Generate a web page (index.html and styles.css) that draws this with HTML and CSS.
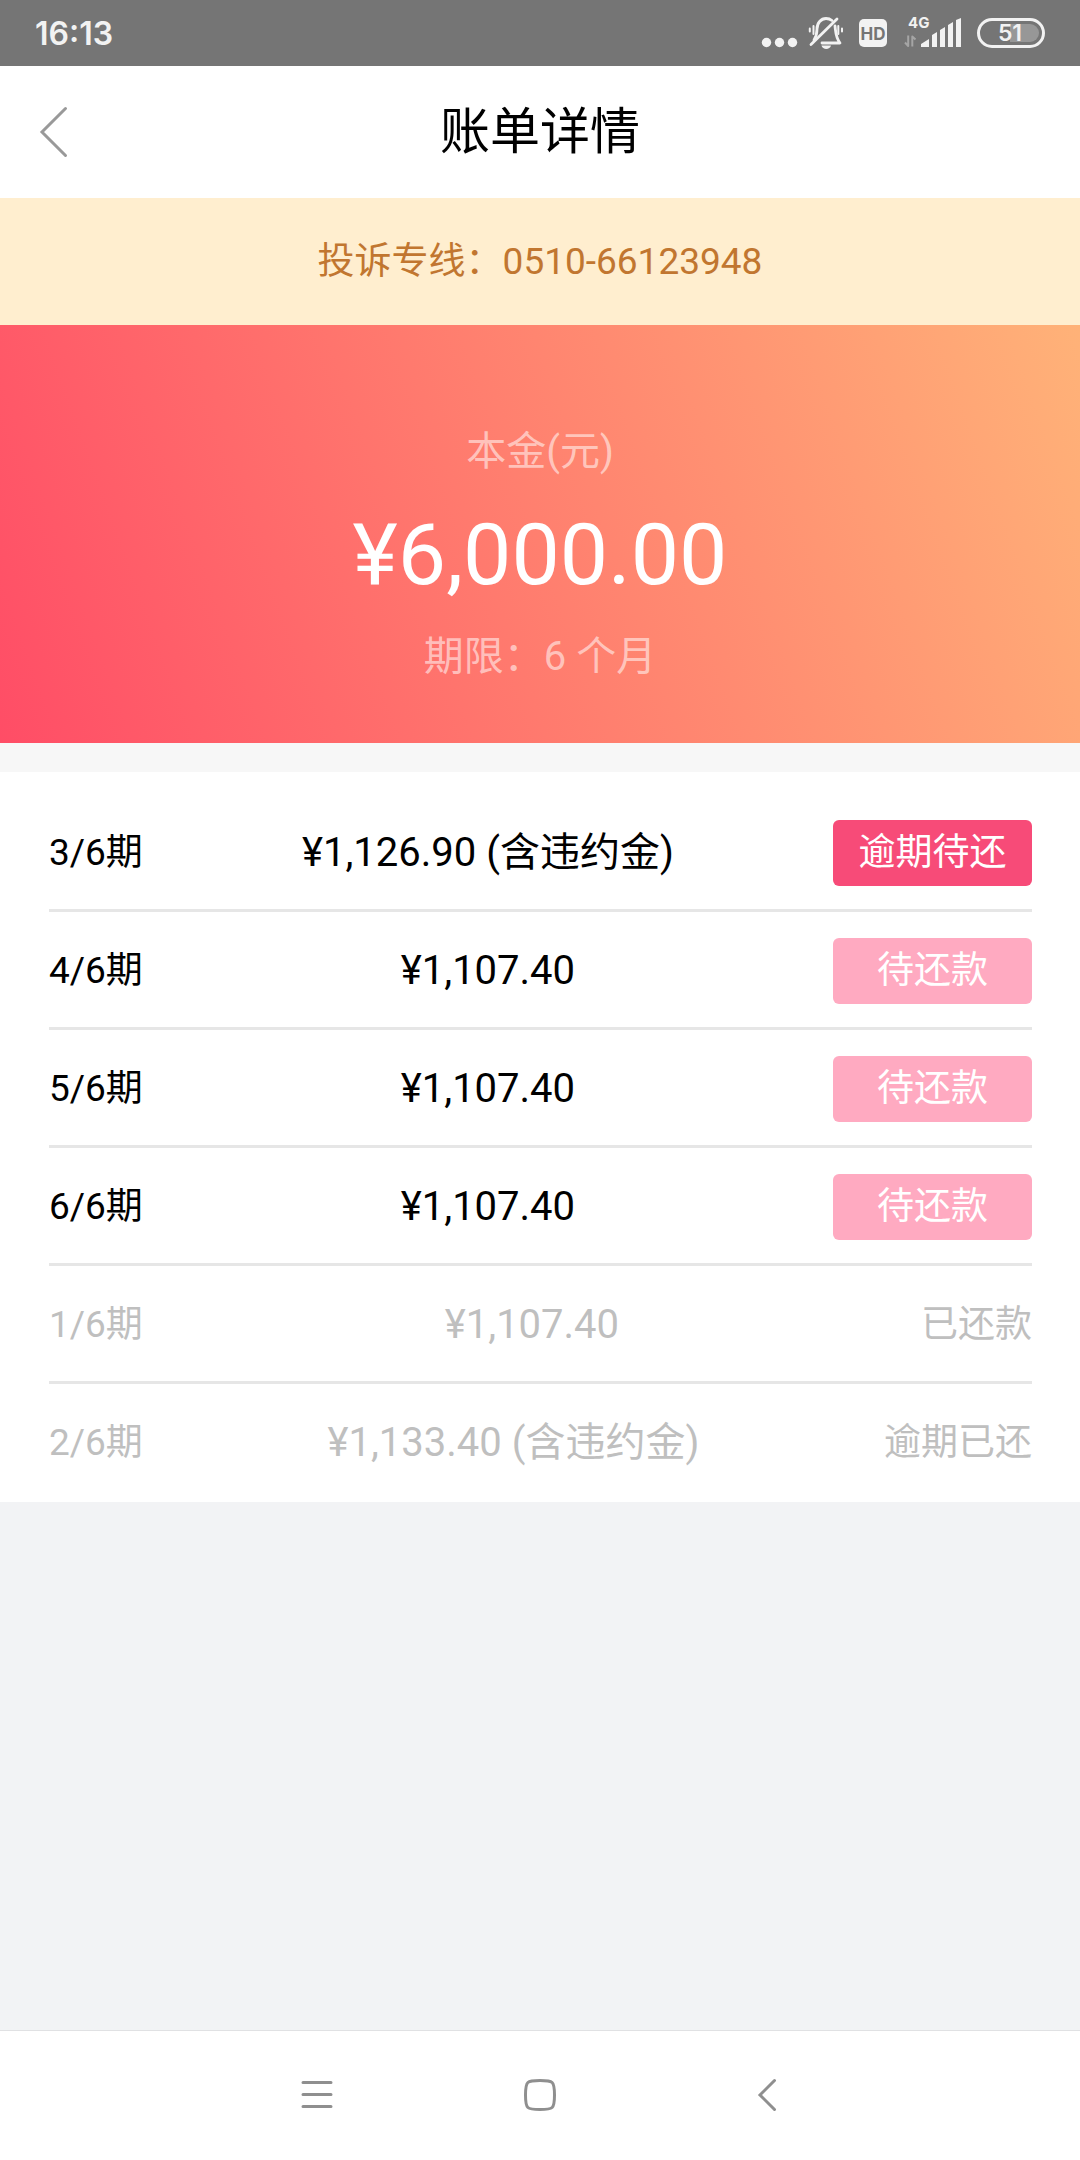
FILE: index.html
```
<!DOCTYPE html>
<html lang="zh-CN">
<head>
<meta charset="utf-8">
<meta name="viewport" content="width=device-width, initial-scale=1">
<title>账单详情</title>
<link rel="stylesheet" href="styles.css">
</head>
<body>
<div class="status-bar">
  <span class="clock">16:13</span>
  <div class="status-icons">
    <svg width="38" height="66" viewBox="760 0 38 66" fill="#f2f2f2"><circle cx="766.5" cy="42.5" r="4.7"/><circle cx="779.5" cy="42.5" r="4.7"/><circle cx="792.5" cy="42.5" r="4.7"/></svg>
    <svg width="36" height="66" viewBox="808 0 36 66" fill="none" stroke="#f2f2f2" stroke-width="2.8" stroke-linecap="round" stroke-linejoin="round"><path d="M814 40c2-3 3-6 3-11 0-6 4-10.500 9-10.500 2.500 0 4.500.8 6 2"/><path d="M835 26c.8 6 .5 11 5 17h-18"/><path d="M811 44.500L837 19"/><path d="M813.500 26v8M809.800 28.500v3M838.300 26v8M842 28.500v3" stroke-width="2"/><path d="M821.500 45.500h9.500c-1 4.500-8.500 4.500-9.500 0z" fill="#f2f2f2" stroke="none"/></svg>
    <svg width="38" height="66" viewBox="854 0 38 66"><rect x="859" y="19" width="28" height="28" rx="5" fill="#f2f2f2"/><text class="hd" x="873" y="40" text-anchor="middle">HD</text></svg>
    <svg width="64" height="66" viewBox="902 0 64 66" fill="#f2f2f2"><text class="net" x="908" y="28">4G</text><path d="M921 47v-3l8-5v8zM932 47V35l5-3v15zM940 47V30l5-3v20zM948 47V25l5-3v25zM956 47V20l5-2v29z"/><path d="M908.200 35.500v10.500l-3.200-3.500M912.300 46.500V36.500l3.200 3" fill="none" stroke="#a5a5a5" stroke-width="2" stroke-linejoin="round"/></svg>
    <svg width="70" height="66" viewBox="976 0 70 66"><path d="M1010 24h20a9 9 0 0 1 0 18h-20z" fill="#979797"/><rect x="978.500" y="19.500" width="65" height="27" rx="13.500" fill="none" stroke="#f2f2f2" stroke-width="3"/><text class="battery" x="1010" y="41" text-anchor="middle">51</text></svg>
  </div>
</div>
<header class="title-bar">
  <button class="back" type="button" aria-label="返回"><svg width="30" height="54" viewBox="0 0 30 54"><path d="M26.500 3.500L3 27l23.500 23.500"/></svg></button>
  <h1>账单详情</h1>
</header>
<p class="hotline">投诉专线：<a href="tel:051066123948">0510-66123948</a></p>
<main>
  <section class="summary">
    <p class="summary-note">本金(元)</p>
    <p class="principal">¥6,000.00</p>
    <p class="summary-note">期限：6 个月</p>
  </section>
  <ul class="bills">
    <li><span>3/6期</span><span class="amount">¥1,126.90 (含违约金)</span><button class="pay overdue" type="button">逾期待还</button></li>
    <li><span>4/6期</span><span class="amount">¥1,107.40</span><button class="pay" type="button">待还款</button></li>
    <li><span>5/6期</span><span class="amount">¥1,107.40</span><button class="pay" type="button">待还款</button></li>
    <li><span>6/6期</span><span class="amount">¥1,107.40</span><button class="pay" type="button">待还款</button></li>
    <li class="paid"><span>1/6期</span><span class="amount">¥1,107.40</span><span>已还款</span></li>
    <li class="paid"><span>2/6期</span><span class="amount">¥1,133.40 (含违约金)</span><span>逾期已还</span></li>
  </ul>
</main>
<nav class="system-nav">
  <button type="button" aria-label="菜单"><svg width="40" height="40" viewBox="0 0 40 40"><path d="M8 6.500h28M8 18.500h28M8 30.500h28"/></svg></button>
  <button type="button" aria-label="主页"><svg width="40" height="40" viewBox="0 0 40 40"><path d="M20 4.500C33 4.500 34.500 5 34.500 19S33 33.500 20 33.500 5.500 33 5.500 19 7 4.500 20 4.500z"/></svg></button>
  <button type="button" aria-label="返回"><svg width="40" height="40" viewBox="0 0 40 40"><path d="M29.500 4.500L15 19l14.500 14.500"/></svg></button>
</nav>
</body>
</html>
```
FILE: styles.css
```
* { box-sizing: border-box; }

body {
  margin: 0;
  min-height: 100vh;
  display: flex;
  flex-direction: column;
  background: #f2f3f5;
  color: #000;
  font-family: Roboto, "Noto Sans CJK SC", sans-serif;
  font-size: 37px;
  line-height: 54px;
}

h1, p, ul { margin: 0; padding: 0; }

button {
  padding: 0;
  border: 0;
  background: none;
  font: inherit;
  color: inherit;
}

svg { display: block; }

.status-bar {
  display: flex;
  justify-content: space-between;
  align-items: center;
  height: 66px;
  padding: 0 34px 0 35px;
  background: #757575;
  color: #f2f2f2;
}

.clock {
  padding-top: 2px;
  font-family: Inter, sans-serif;
  font-size: 32px;
  font-weight: 600;
}

.status-icons { display: flex; gap: 10px; }

.hd, .net, .battery { font-family: Inter, sans-serif; font-weight: 700; }
.hd { font-size: 17px; fill: #757575; }
.net { font-size: 15px; }
.battery { font-size: 23px; font-weight: 600; fill: #f2f2f2; }

.title-bar {
  display: grid;
  grid-template-columns: 1fr auto 1fr;
  align-items: center;
  height: 132px;
  padding: 0 39px;
  background: #fff;
}

.title-bar h1 {
  font-size: 50px;
  font-weight: 400;
  line-height: 72px;
}

.back { justify-self: start; }

.back path {
  fill: none;
  stroke: #999;
  stroke-width: 3;
  stroke-linecap: round;
}

.hotline {
  padding: 37px 0 36px;
  background: #ffeecf;
  color: #c17630;
  text-align: center;
}

.hotline a { color: inherit; text-decoration: none; }

main { flex: 1; }

.summary {
  padding: 97px 0 56px;
  background: linear-gradient(70deg, #ff4d66, #ffb278);
  color: #fff;
  text-align: center;
}

.summary-note {
  font-size: 40px;
  line-height: 60px;
  color: rgba(255, 255, 255, 0.55);
}

.principal {
  font-size: 86px;
  line-height: 145px;
}

.bills {
  border-top: 29px solid #f7f7f7;
  padding: 22px 48px 0 49px;
  background: #fff;
  list-style: none;
}

.bills li {
  display: flex;
  justify-content: space-between;
  align-items: center;
  height: 118px;
  padding-top: 2px;
  border-bottom: 3px solid #e6e6e6;
}

.bills li:last-child { border-bottom-color: transparent; }

.amount { font-size: 40px; }

.pay {
  width: 199px;
  height: 66px;
  border-radius: 6px;
  background: #ffaac1;
  color: #fff;
}

.overdue { background: #f74b78; }

.paid { color: #bfbfbf; }

.system-nav {
  display: flex;
  justify-content: center;
  height: 130px;
  border-top: 1px solid #e0e1e3;
  background: #fff;
}

.system-nav button {
  display: grid;
  place-items: center;
  width: 225px;
}

.system-nav path {
  fill: none;
  stroke: #8f8f8f;
  stroke-width: 3;
  stroke-linecap: round;
}
```
